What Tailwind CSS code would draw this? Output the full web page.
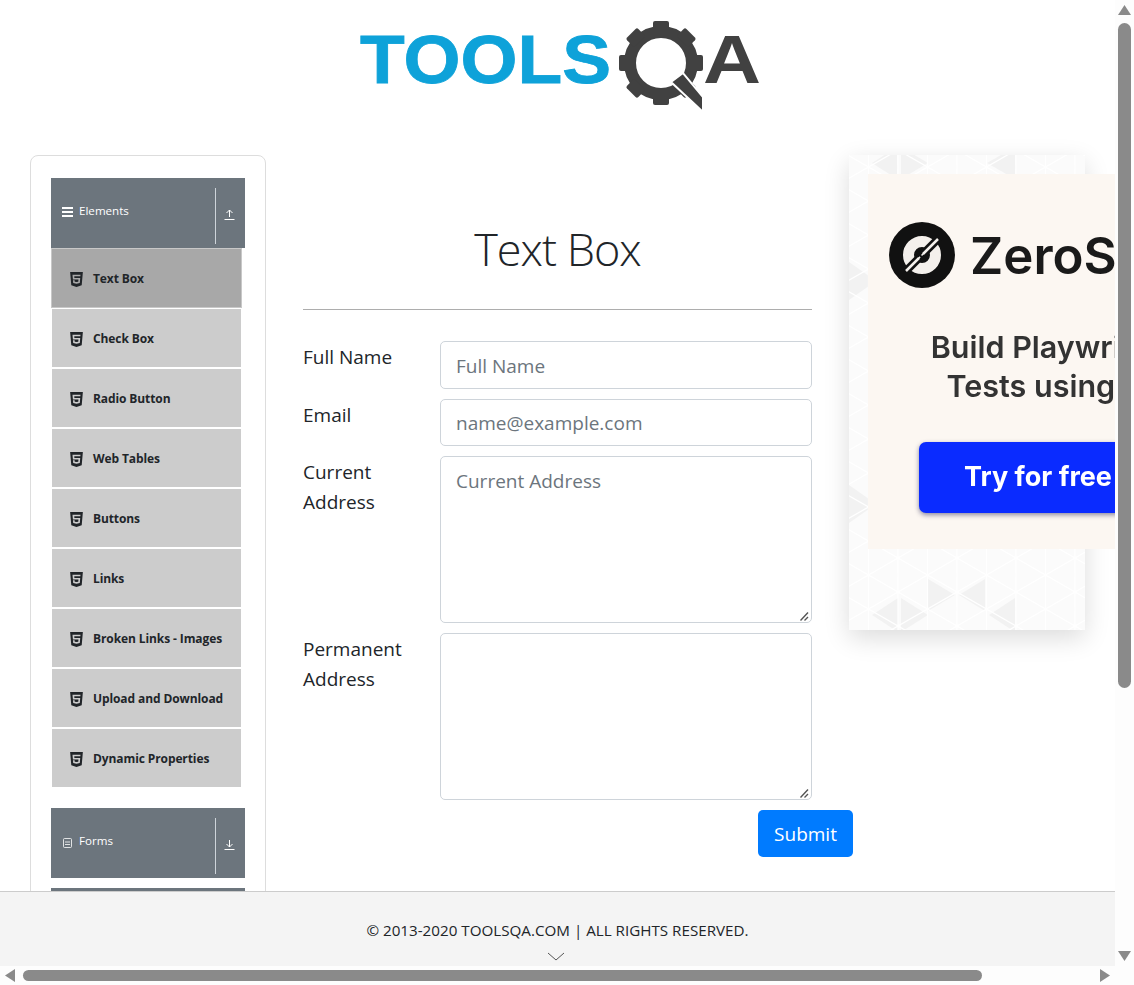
<!DOCTYPE html>
<html lang="en">
<head>
    <meta charset="UTF-8">
    <meta name="viewport" content="width=device-width, initial-scale=1.0">
    <title>Text Box</title>
    <script src="https://cdn.jsdelivr.net/npm/@tailwindcss/browser@4"></script>
</head>
<body class="bg-white">
<div class="relative w-[1134px] h-[985px] overflow-hidden font-['Open_Sans',sans-serif] text-[#212529]">

    <!-- Logo -->
    <header class="flex justify-center h-[155px] pr-[13px]">
        <svg class="mt-[16px] w-[410px] h-[100px] blur-[0.4px]" viewBox="355 16 410 100">
            <text x="359" y="83" textLength="251" lengthAdjust="spacingAndGlyphs" font-family="Liberation Sans" font-weight="700" font-size="69" fill="#0ea2d9" stroke="#0ea2d9" stroke-width="0.8">TOOLS</text>
            <g fill="#414141">
                <circle cx="660" cy="63" r="31" fill="none" stroke="#414141" stroke-width="12"/>
                <rect x="652" y="21" width="16" height="12" rx="2"/>
                <rect x="652" y="21" width="16" height="12" rx="2" transform="rotate(45 660 63)"/>
                <rect x="652" y="21" width="16" height="12" rx="2" transform="rotate(90 660 63)"/>
                <rect x="652" y="21" width="16" height="12" rx="2" transform="rotate(135 660 63)"/>
                <rect x="652" y="21" width="16" height="12" rx="2" transform="rotate(180 660 63)"/>
                <rect x="652" y="21" width="16" height="12" rx="2" transform="rotate(225 660 63)"/>
                <rect x="652" y="21" width="16" height="12" rx="2" transform="rotate(270 660 63)"/>
                <rect x="652" y="21" width="16" height="12" rx="2" transform="rotate(315 660 63)"/>
                <polygon points="670,82 682,73 702,97 702,112" stroke="#ffffff" stroke-width="2"/>
            </g>
            <text x="702" y="83" textLength="58" lengthAdjust="spacingAndGlyphs" font-family="Liberation Sans" font-weight="700" font-size="69" fill="#414141">A</text>
        </svg>
    </header>

    <div class="flex items-start">
        <!-- Sidebar -->
        <aside class="ml-[30px] w-[236px] h-[800px] shrink-0 border border-[#dddddd] rounded-[8px] pl-[20px] pt-[22px]">
            <div class="flex h-[70px] w-[194px] bg-[#6c757d] text-white">
                <div class="flex-1 flex items-center pl-[11px] pb-[5px] gap-[6px] text-[11.6px]">
                    <svg class="w-[11px] h-[10px] mt-[3px]" viewBox="0 0 11 10" fill="#ffffff"><rect y="0" width="11" height="2"/><rect y="4" width="11" height="2"/><rect y="8" width="11" height="2"/></svg>
                    <span>Elements</span>
                </div>
                <div class="w-[30px] mt-[10px] mb-[4px] border-l border-[#ced4da] flex items-center justify-center pr-[3px] pb-[4px]">
                    <svg class="w-[11px] h-[11px]" viewBox="0 0 11 11" fill="none" stroke="#ffffff"><path d="M5.5 8V1M2.5 4l3-3 3 3M0.5 10.5h10"/></svg>
                </div>
            </div>
            <ul class="w-[191px] text-[12px] font-bold text-[#212529] tracking-[-0.1px]">
                <li class="flex items-center h-[60px] pl-[18px] pt-[2px] gap-[10px] bg-[#a8a8a8] border border-[#c8c8c8]"><svg class="w-[13px] h-[17px] fill-[#212529]" viewBox="0 0 384 512"><path d="M0 32l34.9 395.8L191.5 480l157.6-52.2L384 32H0zm308.2 127.9H124.4l4.1 49.4h175.6l-13.6 148.4-97.9 27v.3h-1.1l-98.7-27.3-6-75.8h47.7L138 320l53.5 14.5 53.7-14.5 6-62.2H84.3L71.5 112.2h241.1l-4.4 47.7z"/></svg><span>Text Box</span></li>
                <li class="flex items-center h-[60px] pl-[18px] pt-[2px] gap-[10px] bg-[#cccccc] border border-white"><svg class="w-[13px] h-[17px] fill-[#212529]" viewBox="0 0 384 512"><path d="M0 32l34.9 395.8L191.5 480l157.6-52.2L384 32H0zm308.2 127.9H124.4l4.1 49.4h175.6l-13.6 148.4-97.9 27v.3h-1.1l-98.7-27.3-6-75.8h47.7L138 320l53.5 14.5 53.7-14.5 6-62.2H84.3L71.5 112.2h241.1l-4.4 47.7z"/></svg><span>Check Box</span></li>
                <li class="flex items-center h-[60px] pl-[18px] pt-[2px] gap-[10px] bg-[#cccccc] border border-white"><svg class="w-[13px] h-[17px] fill-[#212529]" viewBox="0 0 384 512"><path d="M0 32l34.9 395.8L191.5 480l157.6-52.2L384 32H0zm308.2 127.9H124.4l4.1 49.4h175.6l-13.6 148.4-97.9 27v.3h-1.1l-98.7-27.3-6-75.8h47.7L138 320l53.5 14.5 53.7-14.5 6-62.2H84.3L71.5 112.2h241.1l-4.4 47.7z"/></svg><span>Radio Button</span></li>
                <li class="flex items-center h-[60px] pl-[18px] pt-[2px] gap-[10px] bg-[#cccccc] border border-white"><svg class="w-[13px] h-[17px] fill-[#212529]" viewBox="0 0 384 512"><path d="M0 32l34.9 395.8L191.5 480l157.6-52.2L384 32H0zm308.2 127.9H124.4l4.1 49.4h175.6l-13.6 148.4-97.9 27v.3h-1.1l-98.7-27.3-6-75.8h47.7L138 320l53.5 14.5 53.7-14.5 6-62.2H84.3L71.5 112.2h241.1l-4.4 47.7z"/></svg><span>Web Tables</span></li>
                <li class="flex items-center h-[60px] pl-[18px] pt-[2px] gap-[10px] bg-[#cccccc] border border-white"><svg class="w-[13px] h-[17px] fill-[#212529]" viewBox="0 0 384 512"><path d="M0 32l34.9 395.8L191.5 480l157.6-52.2L384 32H0zm308.2 127.9H124.4l4.1 49.4h175.6l-13.6 148.4-97.9 27v.3h-1.1l-98.7-27.3-6-75.8h47.7L138 320l53.5 14.5 53.7-14.5 6-62.2H84.3L71.5 112.2h241.1l-4.4 47.7z"/></svg><span>Buttons</span></li>
                <li class="flex items-center h-[60px] pl-[18px] pt-[2px] gap-[10px] bg-[#cccccc] border border-white"><svg class="w-[13px] h-[17px] fill-[#212529]" viewBox="0 0 384 512"><path d="M0 32l34.9 395.8L191.5 480l157.6-52.2L384 32H0zm308.2 127.9H124.4l4.1 49.4h175.6l-13.6 148.4-97.9 27v.3h-1.1l-98.7-27.3-6-75.8h47.7L138 320l53.5 14.5 53.7-14.5 6-62.2H84.3L71.5 112.2h241.1l-4.4 47.7z"/></svg><span>Links</span></li>
                <li class="flex items-center h-[60px] pl-[18px] pt-[2px] gap-[10px] bg-[#cccccc] border border-white"><svg class="w-[13px] h-[17px] fill-[#212529]" viewBox="0 0 384 512"><path d="M0 32l34.9 395.8L191.5 480l157.6-52.2L384 32H0zm308.2 127.9H124.4l4.1 49.4h175.6l-13.6 148.4-97.9 27v.3h-1.1l-98.7-27.3-6-75.8h47.7L138 320l53.5 14.5 53.7-14.5 6-62.2H84.3L71.5 112.2h241.1l-4.4 47.7z"/></svg><span>Broken Links - Images</span></li>
                <li class="flex items-center h-[60px] pl-[18px] pt-[2px] gap-[10px] bg-[#cccccc] border border-white"><svg class="w-[13px] h-[17px] fill-[#212529]" viewBox="0 0 384 512"><path d="M0 32l34.9 395.8L191.5 480l157.6-52.2L384 32H0zm308.2 127.9H124.4l4.1 49.4h175.6l-13.6 148.4-97.9 27v.3h-1.1l-98.7-27.3-6-75.8h47.7L138 320l53.5 14.5 53.7-14.5 6-62.2H84.3L71.5 112.2h241.1l-4.4 47.7z"/></svg><span>Upload and Download</span></li>
                <li class="flex items-center h-[60px] pl-[18px] pt-[2px] gap-[10px] bg-[#cccccc] border border-white"><svg class="w-[13px] h-[17px] fill-[#212529]" viewBox="0 0 384 512"><path d="M0 32l34.9 395.8L191.5 480l157.6-52.2L384 32H0zm308.2 127.9H124.4l4.1 49.4h175.6l-13.6 148.4-97.9 27v.3h-1.1l-98.7-27.3-6-75.8h47.7L138 320l53.5 14.5 53.7-14.5 6-62.2H84.3L71.5 112.2h241.1l-4.4 47.7z"/></svg><span>Dynamic Properties</span></li>
            </ul>
            <div class="flex h-[70px] w-[194px] mt-[20px] bg-[#6c757d] text-white">
                <div class="flex-1 flex items-center pl-[12px] pb-[5px] gap-[7px] text-[11.6px]">
                    <svg class="w-[9px] h-[10px] mt-[4px]" viewBox="0 0 9 10" fill="none" stroke="#ffffff" stroke-width="0.8"><rect x="0.5" y="0.5" width="8" height="9" rx="1"/><path d="M2 4h5M2 6.5h5"/></svg>
                    <span>Forms</span>
                </div>
                <div class="w-[30px] mt-[10px] mb-[4px] border-l border-[#ced4da] flex items-center justify-center pr-[3px] pb-[4px]">
                    <svg class="w-[11px] h-[11px]" viewBox="0 0 11 11" fill="none" stroke="#ffffff"><path d="M5.5 1v7M2.5 5l3 3 3-3M0.5 10.5h10"/></svg>
                </div>
            </div>
            <div class="h-[70px] w-[194px] mt-[10px] bg-[#6c757d]"></div>
        </aside>

        <!-- Form -->
        <main class="ml-[37px] w-[509px] shrink-0">
            <h1 class="h-[155px] pt-[64px] border-b border-[#adadad] text-center text-[45px] leading-[60px] font-light tracking-[-1px]">Text Box</h1>
            <form class="mt-[31px] text-[19px]">
                <div class="flex h-[48px] mb-[10px]">
                    <label class="w-[137px] leading-[30px] pt-[1px]">Full Name</label>
                    <input type="text" placeholder="Full Name" class="w-[372px] h-[48px] px-[15px] pt-[1px] border border-[#ced4da] rounded-[5px] placeholder:text-[#6c757d]">
                </div>
                <div class="flex h-[47px] mb-[10px]">
                    <label class="w-[137px] leading-[30px] pt-[1px]">Email</label>
                    <input type="text" placeholder="name@example.com" class="w-[372px] h-[47px] px-[15px] pt-[1px] border border-[#ced4da] rounded-[5px] placeholder:text-[#6c757d]">
                </div>
                <div class="flex h-[167px] mb-[10px]">
                    <label class="w-[137px] leading-[30px] pr-[40px] pt-[1px]">Current Address</label>
                    <div class="relative w-[372px]">
                        <textarea placeholder="Current Address" class="block w-full h-[167px] resize-none px-[15px] py-[9px] leading-[30px] border border-[#ced4da] rounded-[5px] placeholder:text-[#6c757d]"></textarea>
                        <svg class="absolute right-[2px] bottom-[2px] w-[10px] h-[10px]" viewBox="0 0 10 10" fill="none" stroke="#555555" stroke-width="1.4"><path d="M0.5 9.5L8 1.5M4.5 9.5L8 6"/></svg>
                    </div>
                </div>
                <div class="flex h-[167px] mb-[10px]">
                    <label class="w-[137px] leading-[30px] pr-[30px] pt-[1px]">Permanent Address</label>
                    <div class="relative w-[372px]">
                        <textarea class="block w-full h-[167px] resize-none px-[15px] py-[9px] border border-[#ced4da] rounded-[5px]"></textarea>
                        <svg class="absolute right-[2px] bottom-[2px] w-[10px] h-[10px]" viewBox="0 0 10 10" fill="none" stroke="#555555" stroke-width="1.4"><path d="M0.5 9.5L8 1.5M4.5 9.5L8 6"/></svg>
                    </div>
                </div>
                <div class="flex justify-end w-[550px]">
                    <button type="button" class="w-[95px] h-[47px] bg-[#007bff] text-white rounded-[5px] pt-[1px]">Submit</button>
                </div>
            </form>
        </main>

        <!-- Ad -->
        <section class="relative ml-[37px] w-[236px] h-[475px] shrink-0 bg-[#fbfbfb] shadow-[0_8px_24px_rgba(0,0,0,0.14)]">
            <svg class="absolute inset-0 w-full h-full blur-[0.5px]" viewBox="0 0 236 475">
                <defs>
                    <pattern id="tri" width="59" height="34" patternUnits="userSpaceOnUse" x="-10" y="-5">
                        <path d="M0 0L59 34M59 0L0 34M0 0V34M29.5 0V34M59 0V34M0 34L29.5 17M0 0L29.5 17" stroke="#ffffff" stroke-width="1.2" fill="none"/>
                    </pattern>
                </defs>
                <g fill="#f2f2f2">
                    <polygon points="23,8 48,-8 48,24"/>
                    <polygon points="52,-8 52,24 79,8"/>
                    <polygon points="138,8 166,-8 166,24"/>
                    <polygon points="0,107 0,145 27,126"/>
                    <polygon points="0,330 0,368 27,349"/>
                    <polygon points="23,460 49,443 49,477"/>
                    <polygon points="52,443 52,477 79,460"/>
                    <polygon points="79,424 79,456 106,440"/>
                    <polygon points="110,440 136,424 136,456"/>
                    <polygon points="140,460 166,443 166,477"/>
                </g>
                <rect width="236" height="475" fill="url(#tri)"/>
            </svg>
            <div class="absolute left-[19px] top-[19px] w-[247px] h-[375px] overflow-hidden bg-[#fcf7f2] font-['Inter',sans-serif]">
                <div class="blur-[0.4px]">
                    <div class="flex items-center mt-[48px] ml-[21px] h-[66px] gap-[15px]">
                        <svg class="w-[66px] h-[66px] shrink-0" viewBox="0 0 66 66">
                            <circle cx="33" cy="33" r="33" fill="#111111"/>
                            <circle cx="33" cy="33" r="13.5" fill="none" stroke="#f4f0ec" stroke-width="11"/>
                            <path d="M16 50L50 16" stroke="#111111" stroke-width="8"/>
                            <path d="M17 49L30 36M34 32L49 17" stroke="#f4f0ec" stroke-width="2.5"/>
                            <path d="M29 37L37 29" stroke="#f4f0ec" stroke-width="1.5" stroke-dasharray="3 2"/>
                        </svg>
                        <span class="text-[51px] leading-none font-semibold text-[#1a1a1a] whitespace-nowrap">ZeroStep</span>
                    </div>
                    <p class="mt-[39px] ml-[2px] w-[360px] text-center text-[30.5px] leading-[39px] font-semibold text-[#333333] whitespace-nowrap">Build Playwright<br>Tests using AI</p>
                    <div class="flex items-center mt-[37px] ml-[51px] w-[290px] h-[71px] pl-[45px] bg-[#0a2bff] rounded-[7px] shadow-[0_2px_5px_rgba(0,0,60,0.45)] text-white text-[27px] font-bold whitespace-nowrap">Try for free</div>
                </div>
            </div>
        </section>
    </div>

    <!-- Footer -->
    <footer class="absolute left-0 top-[891px] w-[1115px] h-[75px] bg-[#f4f4f4] border-t border-[#cccccc] text-center text-[15.2px]">
        <p class="pt-[26px] leading-[24px]">© 2013-2020 TOOLSQA.COM | ALL RIGHTS RESERVED.</p>
        <svg class="absolute left-[547px] top-[60px] w-[18px] h-[9px]" viewBox="0 0 18 9" fill="none" stroke="#555555"><path d="M1 1l8 7 8-7"/></svg>
    </footer>

    <!-- Scrollbars -->
    <div class="absolute right-0 top-0 w-[19px] h-[966px] bg-[#fdfdfd]">
        <div class="absolute left-[3px] top-[23px] w-[13px] h-[665px] rounded-[7px] bg-[#8a8a8a]"></div>
        <svg class="absolute left-[3px] top-[5px] w-[13px] h-[10px]" viewBox="0 0 13 10" fill="#8a8a8a"><path d="M6.5 0L13 10H0z"/></svg>
        <svg class="absolute left-[3px] top-[951px] w-[13px] h-[10px]" viewBox="0 0 13 10" fill="#8a8a8a"><path d="M6.5 10L13 0H0z"/></svg>
    </div>
    <div class="absolute left-0 bottom-0 w-[1134px] h-[19px] bg-[#fdfdfd]">
        <div class="absolute left-[23px] top-[4px] w-[959px] h-[11px] rounded-[6px] bg-[#8a8a8a]"></div>
        <svg class="absolute left-[5px] top-[3px] w-[10px] h-[13px]" viewBox="0 0 10 13" fill="#8a8a8a"><path d="M0 6.5L10 0V13z"/></svg>
        <svg class="absolute left-[1100px] top-[3px] w-[10px] h-[13px]" viewBox="0 0 10 13" fill="#8a8a8a"><path d="M10 6.5L0 0V13z"/></svg>
    </div>
</div>
</body>
</html>
